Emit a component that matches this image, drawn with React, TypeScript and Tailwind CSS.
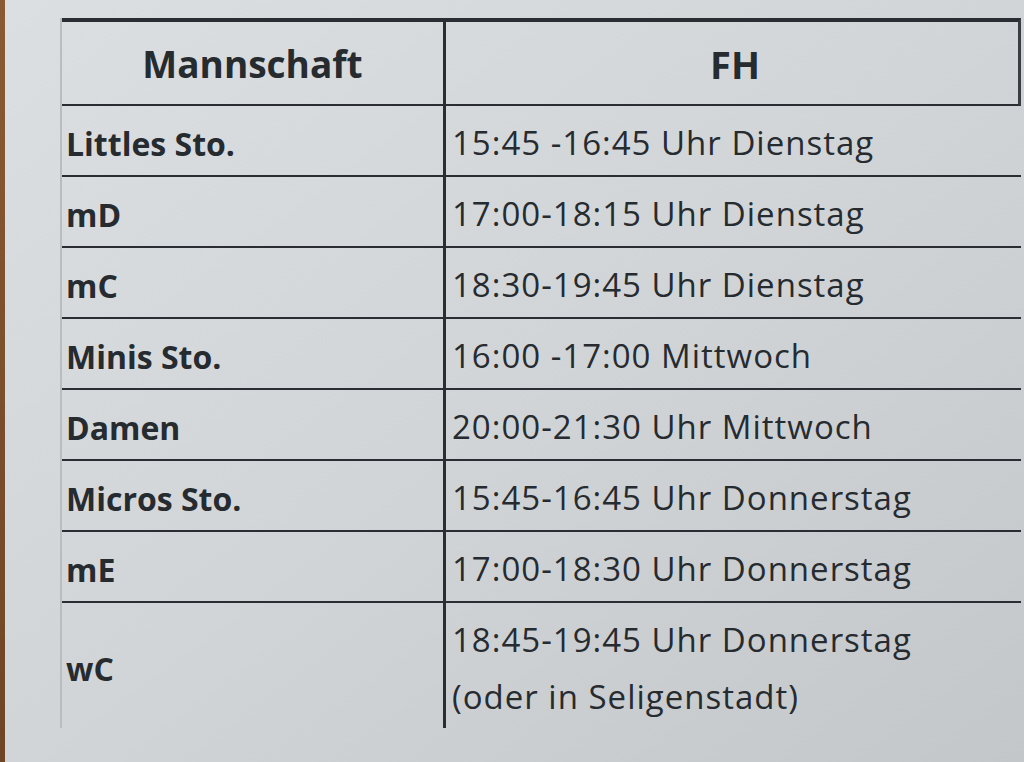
import React from 'react';

const rows: { team: string; times: string[] }[] = [
  { team: 'Littles Sto.', times: ['15:45 -16:45 Uhr Dienstag'] },
  { team: 'mD', times: ['17:00-18:15 Uhr Dienstag'] },
  { team: 'mC', times: ['18:30-19:45 Uhr Dienstag'] },
  { team: 'Minis Sto.', times: ['16:00 -17:00 Mittwoch'] },
  { team: 'Damen', times: ['20:00-21:30 Uhr Mittwoch'] },
  { team: 'Micros Sto.', times: ['15:45-16:45 Uhr Donnerstag'] },
  { team: 'mE', times: ['17:00-18:30 Uhr Donnerstag'] },
  { team: 'wC', times: ['18:45-19:45 Uhr Donnerstag', '(oder in Seligenstadt)'] },
];

export default function App() {
  return (
    <div
      className="flex h-[762px] w-[1024px] overflow-hidden bg-gradient-to-br from-[#dcdfe2] via-[#d2d5d8] to-[#c4c7ca] text-[#262b30]"
      style={{ fontFamily: '"Open Sans", "Noto Sans", sans-serif' }}
    >
      {/* wood behind the sheet */}
      <div className="w-[5px] shrink-0 bg-gradient-to-b from-[#8a5a34] to-[#6e4526]" />

      <div className="flex-1 pl-[55px] pt-[18px]">
        <div className="w-[961px] border-l-2 border-[#b9bdc1]">
          {/* header */}
          <div className="grid h-[88px] grid-cols-[381px_1fr] border-t-4 border-b-2 border-r-[3px] border-t-[#2a2e32] border-b-[#2a2e32] border-r-[#3a3e42]">
            <div className="flex items-center justify-center pt-[2px] text-[37px] font-bold">
              Mannschaft
            </div>
            <div className="flex items-center justify-center border-l-[3px] border-[#2a2e32] pl-[6px] pt-[2px] text-[38px] font-bold">
              FH
            </div>
          </div>

          {rows.map((row, i) => {
            const last = i === rows.length - 1;
            return (
              <div
                key={row.team}
                className={
                  last
                    ? 'grid h-[125px] grid-cols-[381px_1fr]'
                    : 'grid h-[71px] grid-cols-[381px_1fr] border-b-2 border-[#2a2e32]'
                }
              >
                <div className="flex items-center pl-[4px] pt-[6px] text-[32px] font-bold">
                  {row.team}
                </div>
                <div className="flex flex-col justify-center border-l-[3px] border-[#2a2e32] pl-[6px] pt-[4px] text-[33px] tracking-[1px]">
                  {row.times.map((t) => (
                    <div key={t} className="leading-[57px]">
                      {t}
                    </div>
                  ))}
                </div>
              </div>
            );
          })}
        </div>
      </div>
    </div>
  );
}
